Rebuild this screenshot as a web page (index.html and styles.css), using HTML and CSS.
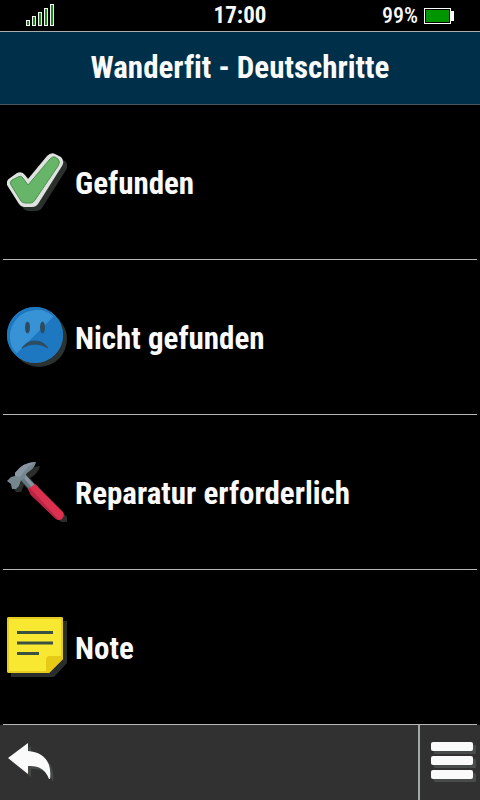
FILE: index.html
```html
<!DOCTYPE html>
<html lang="de">
<head>
  <meta charset="UTF-8" />
  <meta name="viewport" content="width=device-width, initial-scale=1.0"/>
  <title>Wanderfit - Deutschritte</title>
  <link rel="stylesheet" href="styles.css">
</head>
<body>

  <div class="status-bar">
    <svg class="signal" width="28" height="22" viewBox="0 0 28 22" fill="#1c861c" stroke="#f4f4f4">
      <rect x="0.5" y="16.5" width="3" height="5"/>
      <rect x="6.5" y="12.5" width="3" height="9"/>
      <rect x="12.5" y="8.5" width="3" height="13"/>
      <rect x="18.5" y="4.5" width="3" height="17"/>
      <rect x="24.5" y="0.5" width="3" height="21"/>
    </svg>
    <div class="clock">17:00</div>
    <div class="power">
      <span>99%</span>
      <svg width="30" height="16" viewBox="0 0 30 16">
        <rect x="0.5" y="0.5" width="26" height="15" stroke="#fff"/>
        <rect x="2" y="2" width="23" height="12" fill="#009600"/>
        <rect x="27" y="3" width="3" height="10" fill="#fff"/>
      </svg>
    </div>
  </div>

  <h1 class="title">Wanderfit - Deutschritte</h1>

  <div class="menu">
    <button class="item" type="button">
      <svg width="60" height="60" viewBox="0 0 60 60">
        <path d="M0 33Q-1 28 3 26L10 21Q15 19 18 23L21 27L40 4Q44 0 48 2L54 5Q58 9 55 14L31 52Q29 55 25 55H17Q14 55 12 52Z" fill="#2b302d" transform="translate(4 4)"/>
        <path d="M0 33Q-1 28 3 26L10 21Q15 19 18 23L21 27L40 4Q44 0 48 2L54 5Q58 9 55 14L31 52Q29 55 25 55H17Q14 55 12 52Z" fill="#dfe3df"/>
        <path d="M4 33Q2 30 5 28L11 25Q14 23 16 26L21 33L43 7Q46 4 48 5L51 7Q54 10 51 14L28 48Q26 51 24 51H18Q16 51 14 49Z" fill="#67b568" stroke="#4c8f50"/>
      </svg>
      <span>Gefunden</span>
    </button>
    <button class="item" type="button">
      <svg width="60" height="60" viewBox="0 0 60 60">
        <circle cx="32" cy="32" r="28" fill="#2c322f"/>
        <circle cx="28" cy="28" r="28" fill="#1d77c1"/>
        <path d="M9 47A27 27 0 0 1 47 9Z" fill="#3793d5"/>
        <circle cx="28" cy="28" r="27" fill="none" stroke="#2078be" stroke-width="2"/>
        <ellipse cx="20.500" cy="20.500" rx="2.5" ry="6" fill="#2e4c60"/>
        <ellipse cx="35.500" cy="20.500" rx="2.5" ry="6" fill="#2e4c60"/>
        <path d="M15 41Q20 34 28 34Q36 34 41 41Q35 37 28 37Q21 37 15 41Z" fill="#2e4c60" stroke="#2e4c60" stroke-linejoin="round"/>
      </svg>
      <span>Nicht gefunden</span>
    </button>
    <button class="item" type="button">
      <svg width="60" height="60" viewBox="0 0 60 60">
        <path d="M0 19L9 11Q17 1 29 0Q27 8 19 12L29 23L56 51Q58 55 55 57Q53 59 50 56L23 30L13 19L10 26H5Z" fill="#292d2b" transform="translate(4 4)"/>
        <path d="M12 16L17 11L28 23L23 28Z" fill="#8796a0"/>
        <path d="M12 16L15 14L25 26L23 28Z" fill="#65757c"/>
        <path d="M0 19L4 15L8 14V11Q16 0 29 0Q28 6 20 11Q18 13 18 16L14 18L12 24L9 27H5L4 22Z" fill="#75868f"/>
        <path d="M8 14V11Q16 0 29 0Q21 4 17 10L13 15Z" fill="#8796a0"/>
        <path d="M21 27L28 22Q31 24 32 26L56 50Q58 54 55 57Q52 59 49 57L24 33Z" fill="#dc304f"/>
        <path d="M21 27L23 26L52 58Q50 58 48 56L24 33Z" fill="#b82545"/>
      </svg>
      <span>Reparatur erforderlich</span>
    </button>
    <button class="item" type="button">
      <svg width="60" height="60" viewBox="0 0 60 60">
        <path d="M4 4H60V46L47 60H4Z" fill="#292d2b"/>
        <path d="M1 0H55L56 1V42L42 56H1L0 55V1Z" fill="#e5cc20"/>
        <path d="M2 2H54V39H43Q40 39 39 43V54H2Z" fill="#f8e832"/>
        <path d="M42 56L56 42V39H43Q39 39 39 43V54Z" fill="#e7ca15"/>
        <path d="M10 15.500H46M10 26H46M10 36.500H32" stroke="#3b5142" stroke-width="3"/>
      </svg>
      <span>Note</span>
    </button>
  </div>

  <div class="toolbar">
    <button class="back" type="button" aria-label="Zurück">
      <svg width="46" height="40" viewBox="0 0 46 40">
        <path d="M0 15L20 0V8Q36 9 41 22Q43 28 42 36Q36 22 20 23V31Z" fill="#454a47" transform="translate(3 3)"/>
        <path d="M0 15L20 0V8Q36 9 41 22Q43 28 42 36H41Q36 22 20 23V31Z" fill="#fafafa"/>
      </svg>
    </button>
    <button class="more" type="button" aria-label="Menü">
      <svg width="45" height="42" viewBox="0 0 45 42">
        <g fill="#484c4a">
          <rect x="3" y="3" width="42" height="9" rx="1"/>
          <rect x="3" y="17" width="42" height="9" rx="1"/>
          <rect x="3" y="31" width="42" height="9" rx="1"/>
        </g>
        <g fill="#fafafa">
          <rect width="42" height="9" rx="2"/>
          <rect y="14" width="42" height="9" rx="2"/>
          <rect y="28" width="42" height="9" rx="2"/>
        </g>
      </svg>
    </button>
  </div>

</body>
</html>
```
FILE: styles.css
```css
html, body {
  margin: 0;
  padding: 0;
  height: 100%;
}

body {
  display: flex;
  flex-direction: column;
  background: #000;
  color: #fafafa;
  font-family: "Roboto Condensed", Roboto, sans-serif;
  font-weight: bold;
  font-variant-ligatures: none;
}

svg {
  display: block;
  flex: none;
}

.status-bar {
  display: grid;
  grid-template-columns: 1fr auto 1fr;
  align-items: center;
  box-sizing: border-box;
  height: 32px;
  padding: 0 26px;
  border-bottom: 1px solid #a9adad;
}

.signal {
  margin-bottom: 1px;
}

.clock {
  font-size: 23px;
  line-height: 30px;
}

.power {
  display: flex;
  justify-content: flex-end;
  align-items: center;
  gap: 6px;
  font-size: 22px;
  font-weight: 500;
  line-height: 30px;
}

.title {
  margin: 0;
  padding: 16px 8px;
  background: #003049;
  border-bottom: 1px solid #48565d;
  font-size: 31px;
  line-height: 40px;
  text-align: center;
}

.menu {
  flex: 1;
  display: flex;
  flex-direction: column;
  padding: 0 3px;
}

button {
  margin: 0;
  border: 0;
  background: none;
  color: inherit;
  font: inherit;
  cursor: pointer;
}

.item {
  flex: 1;
  display: flex;
  align-items: center;
  gap: 8px;
  padding: 0 4px;
  border-bottom: 1px solid #b5b8b8;
  font-size: 31px;
  line-height: 40px;
  text-align: left;
}

.item span {
  padding-top: 4px;
}

.toolbar {
  display: flex;
  justify-content: space-between;
  height: 75px;
  background: #313131;
}

.back {
  padding: 0 8px;
}

.more {
  padding: 0 4px 0 11px;
  border-left: 2px solid #a5a8a8;
}
```
